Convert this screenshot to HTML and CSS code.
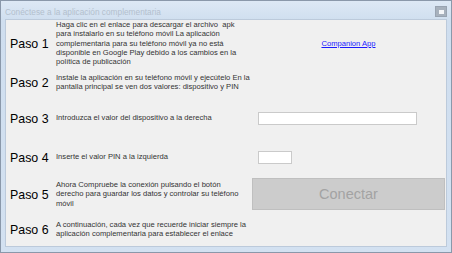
FILE: index.html
```html
<!DOCTYPE html>
<html lang="es">
<head>
    <meta charset="UTF-8">
    <title>Conéctese a la aplicación complementaria</title>
    <link rel="stylesheet" href="styles.css">
</head>
<body>
    <div class="window">
        <div class="title-bar">
            <span class="title">Conéctese a la aplicación complementaria</span>
            <span class="close-btn"><span class="close-mark"></span></span>
        </div>

        <div class="client">
            <div class="step step-1">
                <div class="step-label">Paso 1</div>
                <div class="step-text">Haga clic en el enlace para descargar el archivo &nbsp;apk<br>para instalarlo en su teléfono móvil La aplicación<br>complementaria para su teléfono móvil ya no está<br>disponible en Google Play debido a los cambios en la<br>política de publicación</div>
                <div class="step-control center">
                    <a href="#" class="link">Companion App</a>
                </div>
            </div>

            <div class="step step-2">
                <div class="step-label">Paso 2</div>
                <div class="step-text">Instale la aplicación en su teléfono móvil y ejecútelo En la<br>pantalla principal se ven dos valores: dispositivo y PIN</div>
                <div class="step-control"></div>
            </div>

            <div class="step step-3">
                <div class="step-label">Paso 3</div>
                <div class="step-text">Introduzca el valor del dispositivo a la derecha</div>
                <div class="step-control">
                    <input type="text" class="field field-wide">
                </div>
            </div>

            <div class="step step-4">
                <div class="step-label">Paso 4</div>
                <div class="step-text">Inserte el valor PIN a la izquierda</div>
                <div class="step-control">
                    <input type="text" class="field field-short">
                </div>
            </div>

            <div class="step step-5">
                <div class="step-label">Paso 5</div>
                <div class="step-text">Ahora Compruebe la conexión pulsando el botón<br>derecho para guardar los datos y controlar su teléfono<br>móvil</div>
                <div class="step-control">
                    <button class="connect-btn" disabled>Conectar</button>
                </div>
            </div>

            <div class="step step-6">
                <div class="step-label">Paso 6</div>
                <div class="step-text">A continuación, cada vez que recuerde iniciar siempre la<br>aplicación complementaria para establecer el enlace</div>
                <div class="step-control"></div>
            </div>
        </div>
    </div>
</body>
</html>
```

FILE: styles.css
```css
* {
    margin: 0;
    padding: 0;
    box-sizing: border-box;
}

body {
    font-family: "Liberation Sans", Arial, sans-serif;
    background: #ffffff;
}

.window {
    width: 452px;
    height: 253px;
    background: linear-gradient(180deg, #dde8f5 0%, #cfdeef 20px, #d3e1f1 100%);
    border: 1px solid #8a98aa;
    padding: 0 4px 5px 4px;
    display: flex;
    flex-direction: column;
}

.title-bar {
    height: 18px;
    flex-shrink: 0;
    display: flex;
    align-items: center;
    justify-content: space-between;
    padding-top: 4px;
}

.title {
    font-size: 8.3px;
    color: #b3bfcd;
    margin-top: -1px;
}

.close-btn {
    width: 12px;
    height: 11px;
    background: #a7b1bd;
    border: 1px solid #98a3b1;
    display: flex;
    align-items: center;
    justify-content: center;
    margin-top: -1px;
}

.close-mark {
    width: 5px;
    height: 4px;
    background: #f4f6f9;
}

.client {
    flex: 1;
    min-height: 0;
    overflow: hidden;
    background: #f0f0f0;
    border: 1px solid #bccadb;
    padding: 0 1px 0 4px;
    display: flex;
    flex-direction: column;
}

.step {
    display: grid;
    grid-template-columns: 46px 196px 193px;
    align-items: center;
    flex-shrink: 0;
}

.step-1 { height: 44px; }
.step-2 { height: 36px; }
.step-3 { height: 36px; }
.step-4 { height: 42px; }
.step-5 { height: 30px; }
.step-6 { height: 38px; padding-top: 4px; }

.step-label {
    font-size: 12.4px;
    color: #000000;
    padding-top: 1px;
}

.step-text {
    font-size: 7.6px;
    line-height: 9.3px;
    color: #333333;
    white-space: nowrap;
}

.step-control {
    display: flex;
    align-items: center;
}

.step-control.center {
    justify-content: center;
}

.link {
    font-size: 7.6px;
    color: #1a1aff;
    text-decoration: underline;
}

.field {
    height: 13px;
    background: #ffffff;
    border: 1px solid #cacaca;
    margin-left: 6px;
    outline: none;
}

.field-wide {
    width: 159px;
}

.field-short {
    width: 34px;
}

.connect-btn {
    width: 193px;
    height: 32px;
    background: #cccccc;
    border: 1px solid #bfbfbf;
    color: #a3a3a3;
    font-family: "Liberation Sans", Arial, sans-serif;
    font-size: 14.5px;
}
```
